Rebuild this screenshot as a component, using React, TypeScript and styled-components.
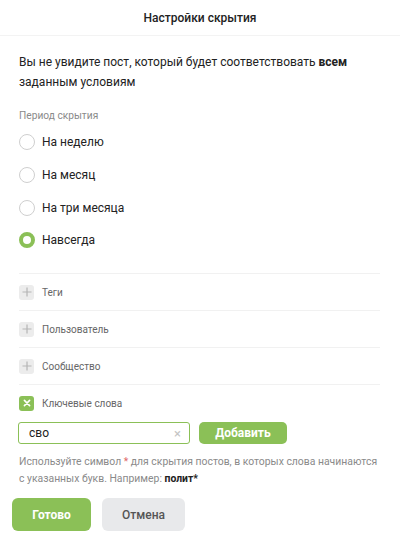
import React, { useState } from "react";
import styled, { createGlobalStyle } from "styled-components";

const GREEN = "#8bc057";

const Global = createGlobalStyle`
  body {
    margin: 0;
    background: #fff;
    font-family: Roboto, "Noto Sans", Arial, sans-serif;
    color: #222;
  }
`;

const periods = ["На неделю", "На месяц", "На три месяца", "Навсегда"];
const filters = [
  { title: "Теги", active: false },
  { title: "Пользователь", active: false },
  { title: "Сообщество", active: false },
  { title: "Ключевые слова", active: true },
];

const App = () => {
  const [period, setPeriod] = useState(3);
  const [word, setWord] = useState("сво");

  return (
    <>
      <Global />
      <Panel>
        <Header>Настройки скрытия</Header>
        <Body>
          <Description>
            Вы не увидите пост, который будет соответствовать <b>всем</b>
            <br />
            заданным условиям
          </Description>
          <SectionLabel>Период скрытия</SectionLabel>
          <RadioList>
            {periods.map(function renderPeriod(title, i) {
              return (
                <RadioRow key={title} onClick={() => setPeriod(i)}>
                  <RadioCircle $checked={period === i} />
                  {title}
                </RadioRow>
              );
            })}
          </RadioList>
          <FilterList>
            {filters.map(function renderFilter(filter) {
              return (
                <FilterRow key={filter.title}>
                  <FilterIcon $active={filter.active}>
                    <svg width="10" height="10" viewBox="0 0 10 10">
                      {filter.active ? (
                        <path
                          d="M2.4 2.4 L7.6 7.6 M7.6 2.4 L2.4 7.6"
                          stroke="#fff"
                          strokeWidth="1.6"
                          strokeLinecap="round"
                        />
                      ) : (
                        <path
                          d="M5 0.5 V9.5 M0.5 5 H9.5"
                          stroke="#b5b5b5"
                          strokeWidth="1.2"
                        />
                      )}
                    </svg>
                  </FilterIcon>
                  <FilterTitle>{filter.title}</FilterTitle>
                </FilterRow>
              );
            })}
          </FilterList>
          <InputRow>
            <InputBox>
              <WordInput
                value={word}
                onChange={(e) => setWord(e.target.value)}
              />
              <ClearButton>×</ClearButton>
            </InputBox>
            <AddButton>Добавить</AddButton>
          </InputRow>
          <Hint>
            <HintLine>
              Используйте символ <Star>*</Star> для скрытия постов, в которых
              слова начинаются
            </HintLine>
            <HintLine>
              с указанных букв. Например: <b>полит*</b>
            </HintLine>
          </Hint>
        </Body>
        <Footer>
          <Button $primary>Готово</Button>
          <Button>Отмена</Button>
        </Footer>
      </Panel>
    </>
  );
};

export default App;

const Panel = styled.div`
  width: 400px;
  height: 543px;
  display: flex;
  flex-direction: column;
`;

const Header = styled.div`
  height: 35px;
  display: flex;
  align-items: center;
  justify-content: center;
  font-size: 12px;
  font-weight: 500;
  color: #222;
  border-bottom: 1px solid #f3f3f3;
`;

const Body = styled.div`
  padding: 16px 19px 0 19px;
`;

const Description = styled.div`
  font-size: 12px;
  line-height: 20px;
  color: #222;

  b {
    font-weight: 700;
  }
`;

const SectionLabel = styled.div`
  margin-top: 17px;
  font-size: 10.2px;
  line-height: 14px;
  color: #8a8a8a;
`;

const RadioList = styled.div`
  margin-top: 3px;
  display: flex;
  flex-direction: column;
`;

const RadioRow = styled.label`
  height: 32.7px;
  display: flex;
  align-items: center;
  gap: 7px;
  font-size: 12px;
  color: #222;
  cursor: pointer;
`;

const RadioCircle = styled.span<{ $checked?: boolean }>`
  box-sizing: border-box;
  width: 16px;
  height: 16px;
  border-radius: 50%;
  border: ${(p) => (p.$checked ? `4.5px solid ${GREEN}` : "1px solid #cfcfcf")};
  background: #fff;
`;

const FilterList = styled.div`
  margin-top: 16.5px;
  margin-right: 1px;
  border-top: 1px solid #f1f1f1;
`;

const FilterRow = styled.div`
  height: 36px;
  display: flex;
  align-items: center;
  gap: 8px;

  & + & {
    border-top: 1px solid #f1f1f1;
  }
`;

const FilterIcon = styled.span<{ $active?: boolean }>`
  width: 15px;
  height: 15px;
  border-radius: 3px;
  display: flex;
  align-items: center;
  justify-content: center;
  background: ${(p) => (p.$active ? GREEN : "#ececec")};
`;

const FilterTitle = styled.span`
  font-size: 10px;
  color: #666;
`;

const InputRow = styled.div`
  margin-top: 1px;
  display: flex;
  align-items: center;
  gap: 9px;
  margin-left: -1px;
`;

const InputBox = styled.div`
  box-sizing: border-box;
  width: 172px;
  height: 22px;
  border: 1px solid ${GREEN};
  border-radius: 3px;
  display: flex;
  align-items: center;
  padding: 0 8px 0 10px;
`;

const WordInput = styled.input`
  flex: 1;
  min-width: 0;
  border: none;
  outline: none;
  padding: 0;
  font-family: inherit;
  font-size: 12px;
  color: #222;
  background: transparent;
`;

const ClearButton = styled.span`
  font-size: 13px;
  line-height: 1;
  color: #c4c4c4;
`;

const AddButton = styled.button`
  width: 88px;
  height: 22px;
  border: none;
  border-radius: 5px;
  background: ${GREEN};
  color: #fff;
  font-family: inherit;
  font-size: 12px;
  font-weight: 700;
  padding: 0;
`;

const Hint = styled.div`
  margin-top: 8.5px;
  font-size: 10.4px;
  line-height: 17px;
  color: #8a8a8a;

  b {
    color: #222;
    font-weight: 700;
  }
`;

const HintLine = styled.div`
  white-space: nowrap;
`;

const Star = styled.span`
  color: #e06a6a;
`;

const Footer = styled.div`
  padding: 11.5px 12px 0 12px;
  display: flex;
  gap: 11px;
`;

const Button = styled.button<{ $primary?: boolean }>`
  height: 33px;
  width: ${(p) => (p.$primary ? "79px" : "83px")};
  border: none;
  border-radius: 6px;
  background: ${(p) => (p.$primary ? GREEN : "#e8e9eb")};
  color: ${(p) => (p.$primary ? "#fff" : "#555")};
  font-family: inherit;
  font-size: 12px;
  font-weight: ${(p) => (p.$primary ? 700 : 500)};
  padding: 0;
`;
